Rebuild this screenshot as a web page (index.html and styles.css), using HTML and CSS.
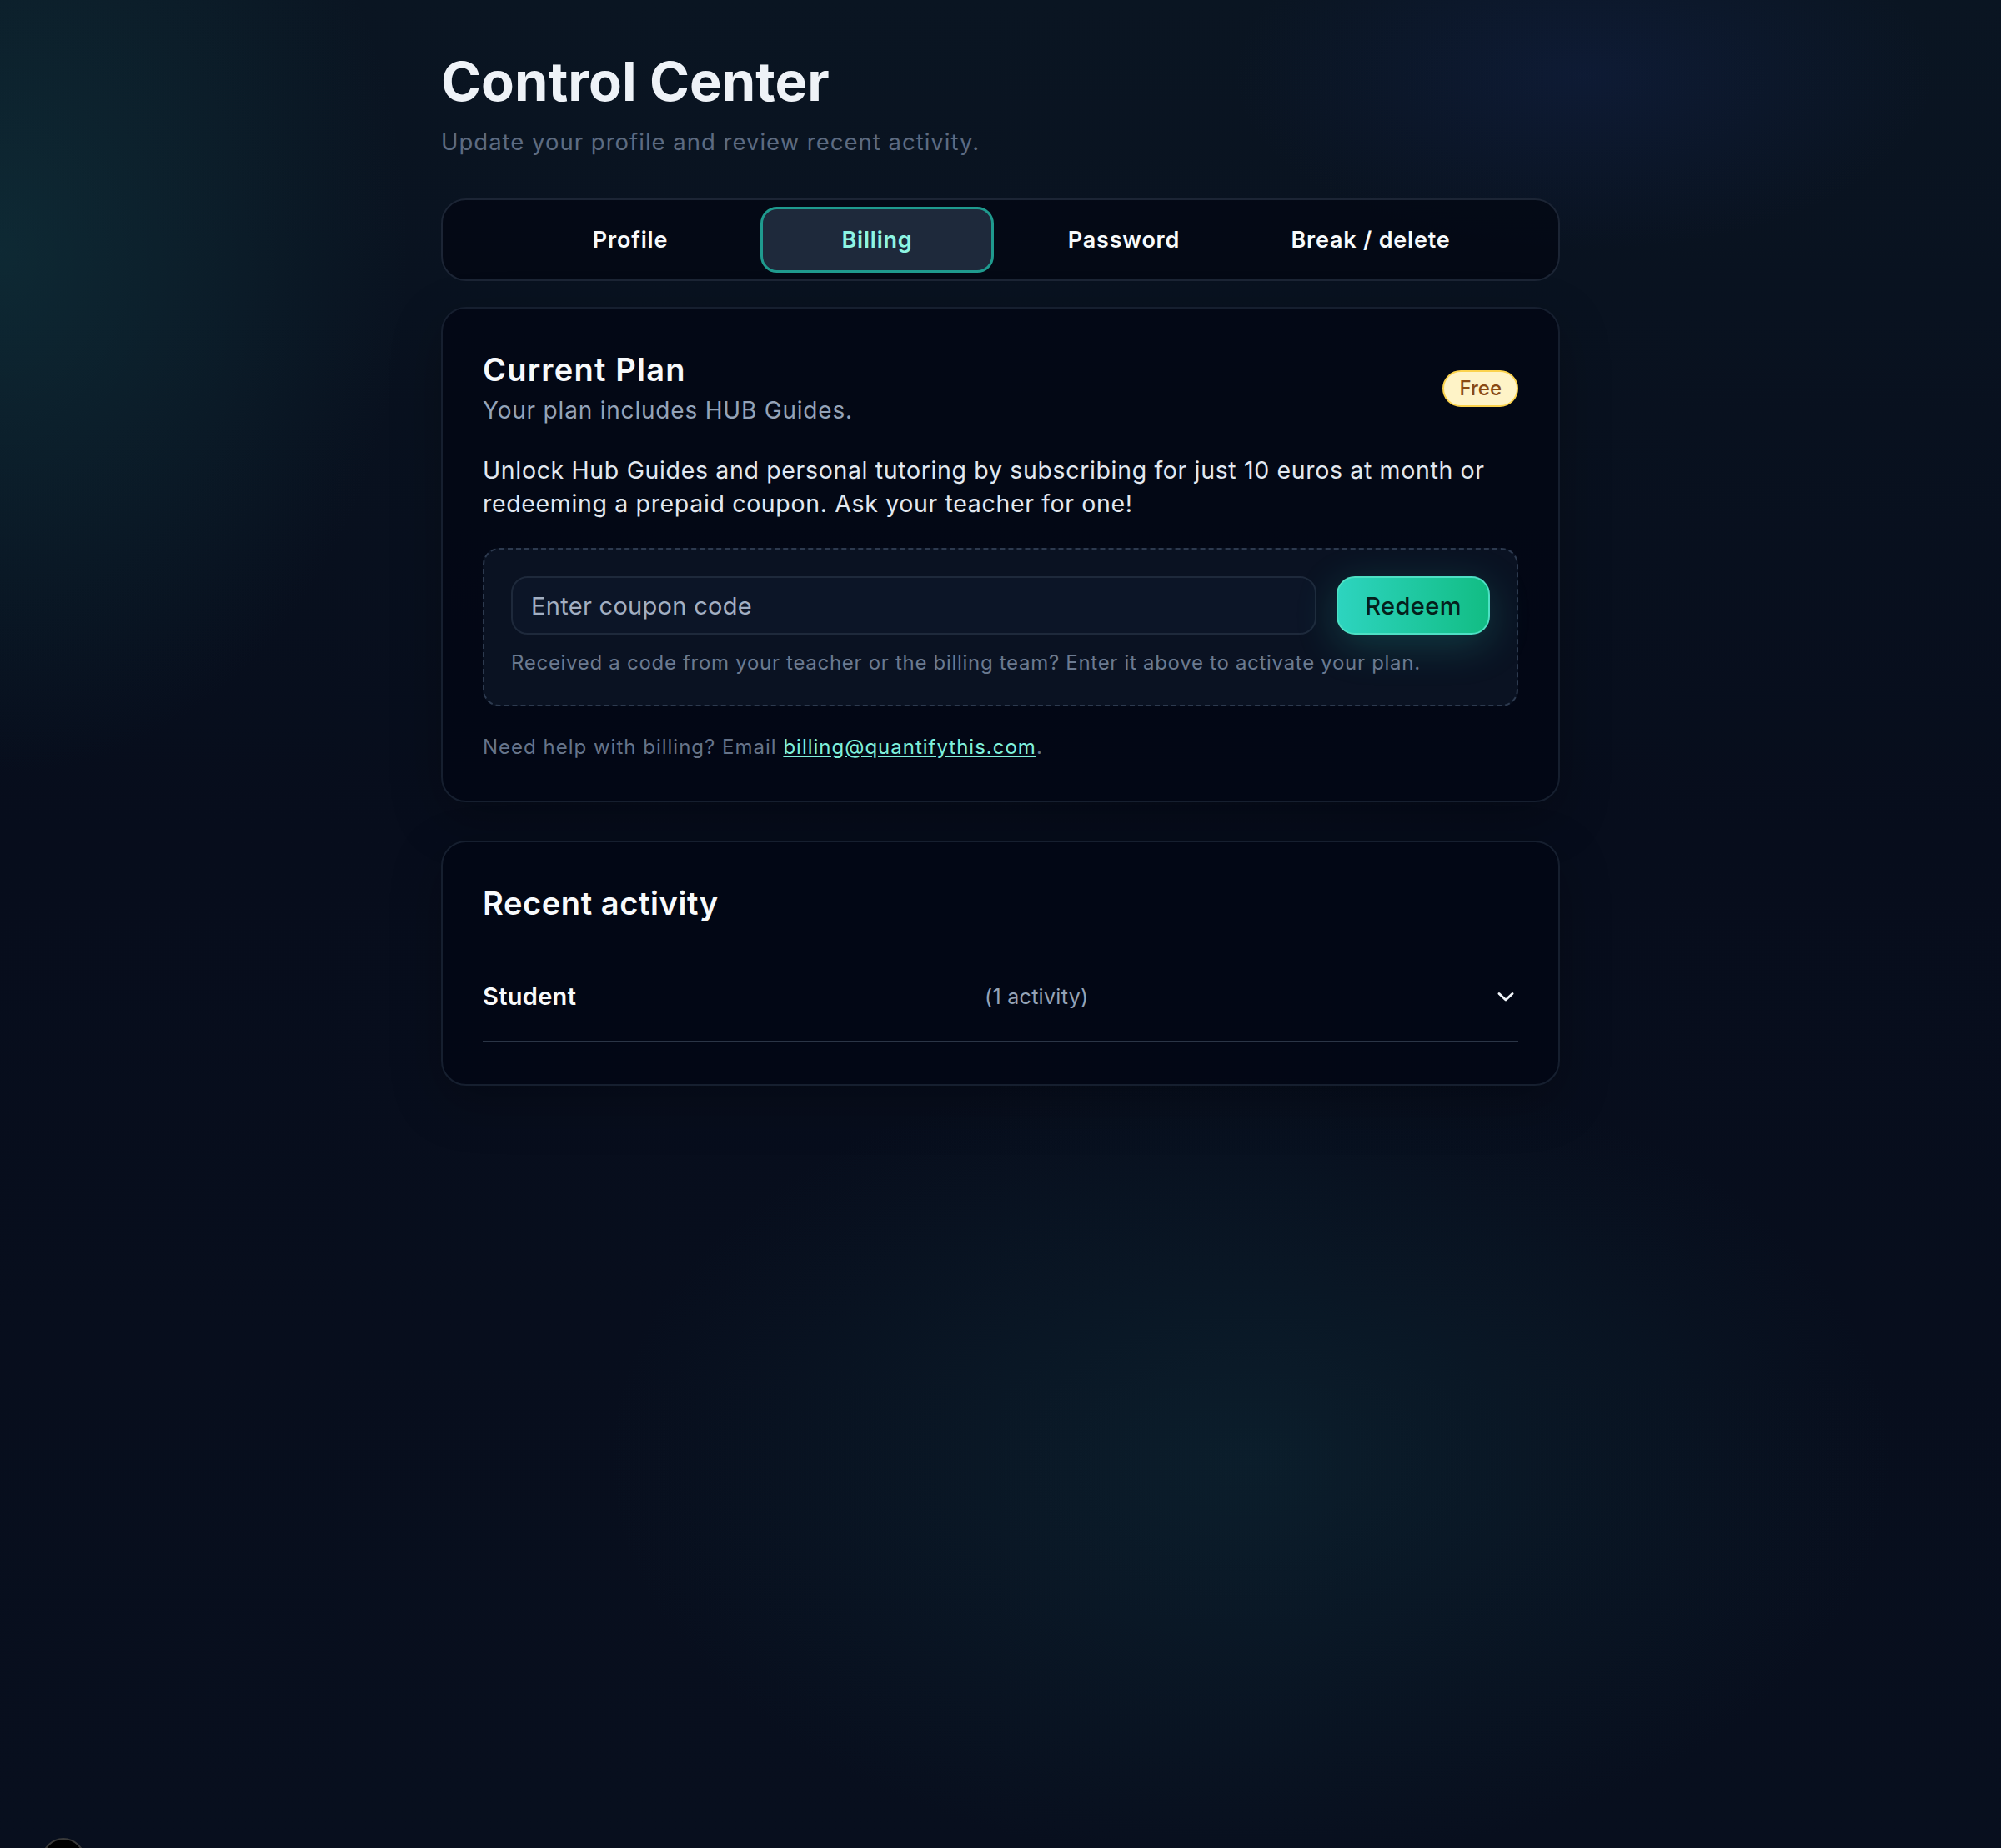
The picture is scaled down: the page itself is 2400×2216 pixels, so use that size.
FILE: index.html
```html
<!DOCTYPE html>
<html>
<head>
<meta charset="UTF-8">
<title>Control Center</title>
<link rel="stylesheet" href="styles.css">
</head>
<body>
    <main class="page">
        <h1 class="page-title">Control Center</h1>
        <p class="page-sub">Update your profile and review recent activity.</p>

        <nav class="tabs">
            <button class="tab">Profile</button>
            <button class="tab tab-active">Billing</button>
            <button class="tab">Password</button>
            <button class="tab">Break / delete</button>
        </nav>

        <section class="card plan">
            <div class="plan-head">
                <div>
                    <h2 class="card-title">Current Plan</h2>
                    <p class="plan-sub">Your plan includes HUB Guides.</p>
                </div>
                <span class="badge">Free</span>
            </div>

            <p class="plan-text">Unlock Hub Guides and personal tutoring by subscribing for just 10 euros at month or redeeming a prepaid coupon. Ask your teacher for one!</p>

            <form class="coupon">
                <div class="coupon-row">
                    <input class="coupon-input" type="text" placeholder="Enter coupon code">
                    <button type="submit" class="redeem">Redeem</button>
                </div>
                <p class="coupon-help">Received a code from your teacher or the billing team? Enter it above to activate your plan.</p>
            </form>

            <p class="plan-help">Need help with billing? Email <a href="#">billing@quantifythis.com</a>.</p>
        </section>

        <section class="card activity">
            <h2 class="card-title">Recent activity</h2>
            <div class="activity-row">
                <span class="activity-name">Student</span>
                <span class="activity-count">(1 activity)</span>
                <svg class="chevron" width="22" height="14" viewBox="0 0 22 14" fill="none">
                    <path d="M3 3.5l8 7.5 8-7.5" stroke="#f1f5f9" stroke-width="3" stroke-linecap="round" stroke-linejoin="round"/>
                </svg>
            </div>
        </section>
    </main>

    <div class="dev-dot"></div>
</body>
</html>
```

FILE: styles.css
```css
html, body {
    margin: 0;
    padding: 0;
}
body {
    min-height: 2216px;
    font-family: Inter, "Noto Sans", sans-serif;
    color: #f1f5f9;
    background-color: #080f1d;
    background-image:
        radial-gradient(ellipse 700px 900px at 0px 300px, rgba(22, 78, 84, 0.38), transparent 70%),
        radial-gradient(ellipse 600px 300px at 1900px 90px, rgba(30, 50, 120, 0.22), transparent 70%),
        radial-gradient(ellipse 1100px 700px at 1500px 1750px, rgba(20, 70, 80, 0.28), transparent 70%),
        linear-gradient(180deg, #0a1522 0%, #070d1c 45%, #080f1e 100%);
}

.page {
    width: 1342px;
    margin: 0 auto;
    padding-top: 60px;
}

.page-title {
    margin: 0;
    font-size: 65px;
    line-height: 76px;
    font-weight: 700;
    color: #eef2f7;
}
.page-sub {
    margin: 14px 0 0 0;
    font-size: 27.5px;
    line-height: 40px;
    letter-spacing: 1px;
    color: #5d6b81;
}

.tabs {
    margin-top: 48px;
    display: flex;
    justify-content: center;
    gap: 16px;
    padding: 8px;
    border: 2px solid #1c2535;
    border-radius: 30px;
    background: rgba(3, 8, 20, 0.85);
}
.tab {
    width: 280px;
    height: 79px;
    border: 3px solid transparent;
    border-radius: 20px;
    background: transparent;
    font-family: Inter, "Noto Sans", sans-serif;
    font-size: 27px;
    font-weight: 600;
    letter-spacing: 0.8px;
    color: #f8fafc;
    cursor: pointer;
}
.tab-active {
    background: #1e293b;
    border-color: #1f9a8e;
    color: #8ef5e3;
}

.card {
    margin-top: 31px;
    padding: 50px 48px;
    border: 2px solid #161f2f;
    border-radius: 30px;
    background: rgba(2, 7, 20, 0.88);
    box-shadow: 0 20px 60px rgba(0, 0, 0, 0.25);
}
.card-title {
    margin: 0;
    font-size: 38px;
    line-height: 46px;
    font-weight: 600;
    letter-spacing: 0.6px;
    color: #f8fafc;
}

.plan {
    padding-bottom: 46px;
}
.plan .card-title {
    letter-spacing: 1.2px;
}
.plan-head {
    display: flex;
    justify-content: space-between;
    align-items: center;
}
.plan-sub {
    margin: 6px 0 0 0;
    font-size: 28px;
    line-height: 40px;
    letter-spacing: 0.8px;
    color: #94a3b8;
}
.badge {
    padding: 4px 18px;
    border: 2px solid #fcd34d;
    border-radius: 999px;
    background: #fef3c7;
    color: #8a4a12;
    font-size: 24px;
    line-height: 32px;
    font-weight: 500;
}

.plan-text {
    margin: 32px 0 0 0;
    font-size: 28.5px;
    line-height: 40px;
    letter-spacing: 0.65px;
    color: #e2e8f0;
}

.coupon {
    margin-top: 33px;
    padding: 32px;
    border: 2px dashed #2d3a4f;
    border-radius: 20px;
    background: #0a1222;
}
.coupon-row {
    display: flex;
    gap: 24px;
}
.coupon-input {
    flex: 1;
    height: 70px;
    box-sizing: border-box;
    padding: 0 22px;
    border: 2px solid #1e293b;
    border-radius: 20px;
    background: #0c1527;
    font-family: Inter, "Noto Sans", sans-serif;
    font-size: 29px;
    letter-spacing: 0.3px;
    color: #e2e8f0;
}
.coupon-input::placeholder {
    color: #a3afc2;
}
.redeem {
    width: 184px;
    height: 70px;
    border: 2px solid #4ee0c4;
    border-radius: 22px;
    background: linear-gradient(90deg, #2dd4bf, #12bd84);
    font-family: Inter, "Noto Sans", sans-serif;
    font-size: 29px;
    font-weight: 500;
    letter-spacing: 0.4px;
    color: #04201b;
    box-shadow: 0 12px 50px rgba(45, 212, 191, 0.22);
    cursor: pointer;
}
.coupon-help {
    margin: 16px 0 0 0;
    font-size: 24px;
    line-height: 36px;
    letter-spacing: 0.7px;
    color: #6b7a90;
}

.plan-help {
    margin: 31px 0 0 0;
    font-size: 24px;
    line-height: 36px;
    letter-spacing: 1px;
    color: #66748a;
}
.plan-help a {
    color: #7ff0dc;
}

.activity {
    margin-top: 46px;
}
.activity-row {
    margin-top: 36px;
    display: grid;
    grid-template-columns: 1fr 1fr auto;
    align-items: center;
    padding: 33px 0;
    border-bottom: 2px solid #2b3546;
}
.activity-name {
    font-size: 29px;
    line-height: 40px;
    font-weight: 600;
    letter-spacing: 0.3px;
    color: #f8fafc;
}
.activity-count {
    margin-left: -6px;
    font-size: 25px;
    line-height: 40px;
    letter-spacing: 0.3px;
    color: #94a3b8;
}
.chevron {
    margin-right: 4px;
}

.dev-dot {
    position: fixed;
    left: 50px;
    bottom: -40px;
    width: 48px;
    height: 48px;
    border-radius: 50%;
    background: #000;
    border: 2px solid #3a3a3a;
}
```
